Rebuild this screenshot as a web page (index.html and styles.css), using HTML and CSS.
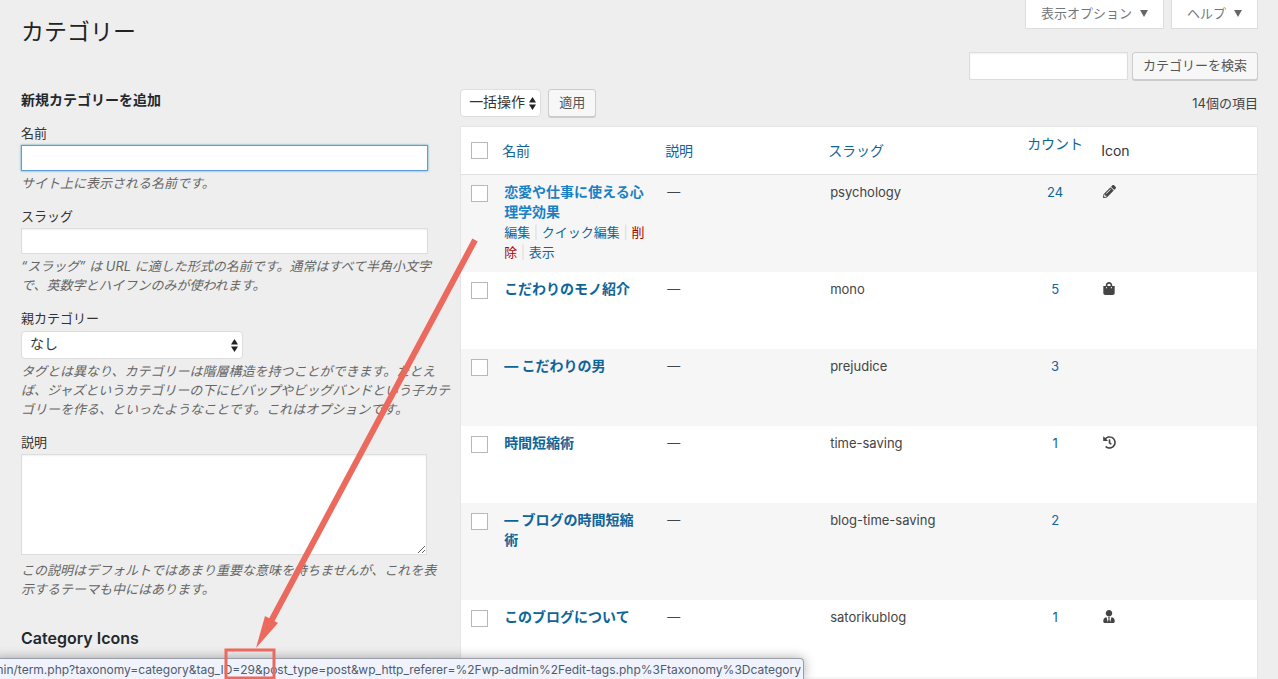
FILE: index.html
```html
<!DOCTYPE html>
<html lang="ja">
<head>
<meta charset="utf-8">
<title>カテゴリー</title>
<link rel="stylesheet" href="styles.css">
</head>
<body>
<div class="page">
  <header class="top">
    <h1 class="title">カテゴリー</h1>
    <div class="tabs">
      <button class="tab" type="button">表示オプション <svg class="caret" viewBox="0 0 9 8"><path d="M0 0h9L4.500 8z"/></svg></button>
      <button class="tab" type="button">ヘルプ <svg class="caret" viewBox="0 0 9 8"><path d="M0 0h9L4.500 8z"/></svg></button>
    </div>
  </header>
  <form class="search">
    <input class="field search-field" type="search" aria-label="カテゴリーを検索">
    <button class="button" type="button">カテゴリーを検索</button>
  </form>
  <div class="columns">
    <form class="add">
      <h2 class="heading">新規カテゴリーを追加</h2>
      <div class="group">
        <label for="name">名前</label>
        <input class="field text focused" id="name" type="text">
        <p class="help">サイト上に表示される名前です。</p>
      </div>
      <div class="group">
        <label for="slug">スラッグ</label>
        <input class="field text" id="slug" type="text">
        <p class="help">“スラッグ” は URL に適した形式の名前です。通常はすべて半角小文字<br>で、英数字とハイフンのみが使われます。</p>
      </div>
      <div class="group">
        <label for="parent">親カテゴリー</label>
        <select class="select parent" id="parent"><option>なし</option></select>
        <p class="help">タグとは異なり、カテゴリーは階層構造を持つことができます。たとえ<br>ば、ジャズというカテゴリーの下にビバップやビッグバンドという子カテ<br>ゴリーを作る、といったようなことです。これはオプションです。</p>
      </div>
      <div class="group">
        <label for="description">説明</label>
        <textarea class="field area" id="description"></textarea>
        <p class="help">この説明はデフォルトではあまり重要な意味を持ちませんが、これを表<br>示するテーマも中にはあります。</p>
      </div>
      <h2 class="heading icons-heading">Category Icons</h2>
    </form>
    <main class="list">
      <div class="tablenav">
        <select class="select bulk" aria-label="一括操作"><option>一括操作</option></select>
        <button class="button" type="button">適用</button>
        <span class="total">14個の項目</span>
      </div>
      <table class="terms">
        <colgroup><col class="c-check"><col class="c-name"><col class="c-desc"><col class="c-slug"><col class="c-count"><col></colgroup>
        <thead>
          <tr>
            <th><input class="check" type="checkbox" aria-label="すべて選択"></th>
            <th><a href="#">名前</a></th>
            <th><a href="#">説明</a></th>
            <th><a href="#">スラッグ</a></th>
            <th class="count"><a href="#">カウント</a></th>
            <th>Icon</th>
          </tr>
        </thead>
        <tbody>
          <tr>
            <td><input class="check" type="checkbox" aria-label="恋愛や仕事に使える心理学効果"></td>
            <td><a class="term hovered" href="#">恋愛や仕事に使える心理学効果</a>
              <div class="actions"><a href="#">編集</a> | <a href="#">クイック編集</a> | <a class="delete" href="#">削除</a> | <a href="#">表示</a></div></td>
            <td>—</td><td>psychology</td>
            <td class="count"><a href="#">24</a></td>
            <td><svg class="icon" viewBox="0 0 512 512"><path d="M498 142l-46 46c-5 5-13 5-17 0L324 77c-5-5-5-12 0-17l46-46c19-19 49-19 68 0l60 60c19 19 19 49 0 68zM284 100L22 362 0 484c-3 16 12 30 28 28l122-22 262-262c5-5 5-13 0-17L301 100c-4-5-12-5-17 0zM124 340c-5-6-5-14 0-20l154-154c6-5 14-5 20 0s5 14 0 20L144 340c-6 5-14 5-20 0zm-36 84h48v36l-64 12-32-32 12-64h36v48z"/></svg></td>
          </tr>
          <tr>
            <td><input class="check" type="checkbox" aria-label="こだわりのモノ紹介"></td>
            <td><a class="term" href="#">こだわりのモノ紹介</a><div class="actions"></div></td>
            <td>—</td><td>mono</td>
            <td class="count"><a href="#">5</a></td>
            <td><svg class="icon narrow" viewBox="0 0 448 512"><path d="M352 160v-32C352 57 295 0 224 0S96 57 96 128v32H0v272c0 44 36 80 80 80h288c44 0 80-36 80-80V160h-96zm-192-32c0-35 29-64 64-64s64 29 64 64v32H160v-32zm160 120c-13 0-24-11-24-24s11-24 24-24 24 11 24 24-11 24-24 24zm-192 0c-13 0-24-11-24-24s11-24 24-24 24 11 24 24-11 24-24 24z"/></svg></td>
          </tr>
          <tr>
            <td><input class="check" type="checkbox" aria-label="こだわりの男"></td>
            <td><a class="term" href="#">— こだわりの男</a><div class="actions"></div></td>
            <td>—</td><td>prejudice</td>
            <td class="count"><a href="#">3</a></td>
            <td></td>
          </tr>
          <tr>
            <td><input class="check" type="checkbox" aria-label="時間短縮術"></td>
            <td><a class="term" href="#">時間短縮術</a><div class="actions"></div></td>
            <td>—</td><td>time-saving</td>
            <td class="count"><a href="#">1</a></td>
            <td><svg class="icon" viewBox="0 0 512 512"><path d="M504 255c0 137-111 249-248 249-59 0-113-20-156-55-11-9-12-26-2-36l11-11c9-9 23-10 33-2 31 25 71 40 114 40 102 0 184-82 184-184S358 72 256 72c-49 0-93 19-126 50l51 51c10 10 3 27-11 27H24c-9 0-16-7-16-16V38c0-14 17-21 27-11l50 49C129 34 190 8 256 8c137 0 248 111 248 247zM324 335l10-13c8-10 6-25-4-33l-42-33V152c0-13-11-24-24-24h-16c-13 0-24 11-24 24v135l66 52c10 8 26 6 34-4z"/></svg></td>
          </tr>
          <tr>
            <td><input class="check" type="checkbox" aria-label="ブログの時間短縮術"></td>
            <td><a class="term" href="#">— ブログの時間短縮術</a><div class="actions"></div></td>
            <td>—</td><td>blog-time-saving</td>
            <td class="count"><a href="#">2</a></td>
            <td></td>
          </tr>
          <tr>
            <td><input class="check" type="checkbox" aria-label="このブログについて"></td>
            <td><a class="term" href="#">このブログについて</a><div class="actions"></div></td>
            <td>—</td><td>satorikublog</td>
            <td class="count"><a href="#">1</a></td>
            <td><svg class="icon narrow" viewBox="0 0 448 512"><path d="M224 256c71 0 128-57 128-128S295 0 224 0 96 57 96 128s57 128 128 128zm96 33l-48 191-32-136 32-56h-96l32 56-32 136-48-191C57 292 0 350 0 422v42c0 27 22 48 48 48h352c27 0 48-21 48-48v-42c0-72-57-130-128-133z"/></svg></td>
          </tr>
          <tr><td></td><td></td><td></td><td></td><td></td><td></td></tr>
        </tbody>
      </table>
    </main>
  </div>
</div>
<div class="status">min/term.php?taxonomy=category&amp;tag_ID=29&amp;post_type=post&amp;wp_http_referer=%2Fwp-admin%2Fedit-tags.php%3Ftaxonomy%3Dcategory</div>
<svg class="annotation" width="480" height="679" viewBox="0 0 480 679">
  <path class="stroke-line" d="M475 240L269 625"/>
  <path class="head" d="M256 648L265 616L278 623z"/>
  <rect class="frame" x="226" y="650" width="48" height="28"/>
</svg>
</body>
</html>
```
FILE: styles.css
```css
* { box-sizing: border-box; }

html, body { height: 100%; }

body {
  margin: 0;
  overflow: hidden;
  position: relative;
  background: #eee;
  color: #444;
  font: 13px/20px Inter, "Noto Sans CJK JP", sans-serif;
}

input, button, select, textarea { font: inherit; margin: 0; }
a { color: #0f6498; text-decoration: none; }

.page { height: 100%; overflow: hidden; padding: 0 20px 0 21px; }

.top { display: flex; justify-content: space-between; align-items: flex-start; height: 52px; }
.title { margin: 16px 0 0; font-size: 23px; line-height: 32px; font-weight: 400; color: #222; }

.tabs { display: flex; gap: 7px; }
.tab {
  display: flex;
  align-items: center;
  gap: 8px;
  height: 29px;
  padding: 0 15px 2px;
  border: 1px solid #ddd;
  border-top: 0;
  background: #fff;
  color: #72777c;
}
.caret { width: 8px; height: 7px; fill: #666; }

.search { display: flex; justify-content: flex-end; gap: 4px; }

.field {
  display: block;
  border: 1px solid #ddd;
  background: #fff;
  box-shadow: inset 0 1px 2px #0001;
  outline: none;
  appearance: none;
}
.search-field { width: 159px; height: 28px; }

.button {
  height: 28px;
  padding: 0 10px 2px;
  border: 1px solid #ccc;
  border-radius: 3px;
  background: #f7f7f7;
  box-shadow: 0 1px 0 #ccc;
  color: #555;
}

.columns { display: grid; grid-template-columns: 35.5% 1fr; }

.heading { margin: 10px 0 13px; font-size: 14px; line-height: 20px; font-weight: 600; color: #23282d; }
.icons-heading { margin-top: 29px; font-size: 16px; }

.group { margin-bottom: 13px; }
.group label { display: block; line-height: 20px; color: #333; }
.text { width: calc(100% - 32px); height: 26px; margin: 2px 0 3px; }
.focused { border-color: #5b9dd9; box-shadow: 0 0 2px #1e8cbecc; }
.area { width: calc(100% - 33px); height: 101px; margin: 2px 0 6px; }
.help { margin: 0; line-height: 19px; font-style: italic; color: #666; white-space: nowrap; }

.select {
  display: block;
  height: 28px;
  padding: 0 8px 2px;
  border: 1px solid #ddd;
  border-radius: 4px;
  appearance: none;
  color: #333;
  font-size: 14px;
  background: #fff url("data:image/svg+xml,%3Csvg xmlns='http://www.w3.org/2000/svg' width='7' height='13'%3E%3Cpath fill='%23222' d='M3.500 0l3.500 5.500H0zM3.500 13l3.500-5.500H0z'/%3E%3C/svg%3E") no-repeat right 4px center;
}
.parent { width: 222px; margin: 3px 0; }
.bulk { width: 81px; }

.tablenav { display: flex; gap: 7px; padding: 9px 0; }
.total { margin-left: auto; line-height: 28px; }

.terms {
  width: 100%;
  table-layout: fixed;
  border: 1px solid #e5e5e5;
  border-collapse: separate;
  border-spacing: 0;
  background: #fff;
}
.c-check { width: 33px; }
.c-name, .c-desc { width: 163px; }
.c-slug { width: 197px; }
.c-count { width: 76px; }

.terms th {
  height: 48px;
  padding: 0 8px;
  border-bottom: 1px solid #e1e1e1;
  text-align: left;
  font-size: 14px;
  font-weight: 400;
  color: #32373c;
}
.terms td { padding: 7px 10px 10px; height: 77px; vertical-align: top; line-height: 20px; }
.terms tbody tr:nth-child(odd) { background: #f6f6f6; }
.terms th.count { padding-bottom: 13px; }
.terms .count { text-align: center; }

.check {
  display: block;
  width: 17px;
  height: 17px;
  border: 1px solid #b4b9be;
  background: #fff;
  appearance: none;
}
.terms td .check { margin-top: 3px; }
.terms td:first-child { padding-left: 10px; padding-right: 0; }
.terms th:first-child { padding-left: 10px; padding-right: 0; }

.term { font-size: 14px; font-weight: 700; }
.hovered { color: #1a80c4; }
.actions { min-height: 40px; color: #ddd; }
.actions .delete { color: #a00; }

.icon { display: block; width: 13px; height: 13px; margin-top: 3px; fill: #444; }
.narrow { width: 12px; }

.status {
  position: absolute;
  left: -7px;
  bottom: 0;
  height: 21px;
  padding-right: 2px;
  border: 1px solid #9a9ea8;
  border-width: 1px 1px 0 0;
  border-radius: 0 4px 0 0;
  background: #f0f3fb;
  box-shadow: 0 0 12px #0005;
  color: #4f5b72;
  font-size: 12px;
  line-height: 21px;
  white-space: nowrap;
}

.annotation { position: absolute; left: 0; top: 0; pointer-events: none; }
.stroke-line { stroke: #ec695e; stroke-width: 6; }
.head { fill: #ec695e; }
.frame { fill: none; stroke: #ec695e; stroke-width: 3; }
```
